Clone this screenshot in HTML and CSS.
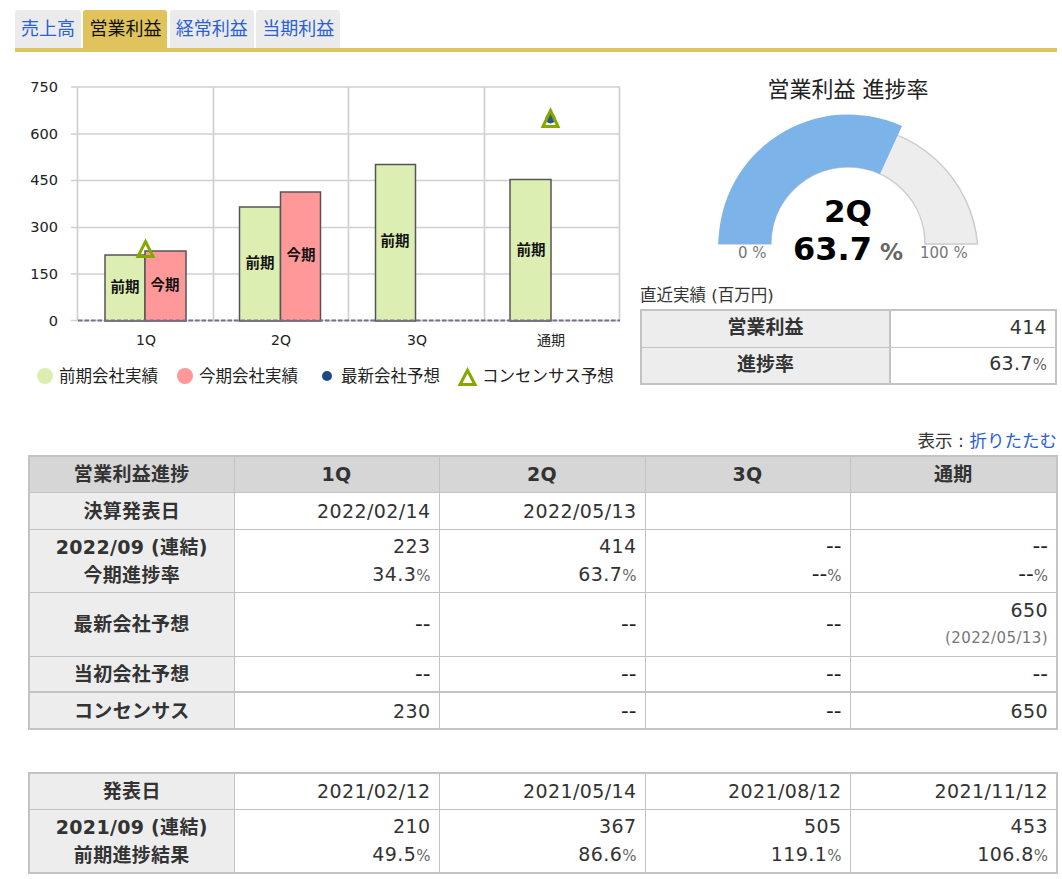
FILE: index.html
```html
<!DOCTYPE html>
<html lang="ja">
<head>
    <meta charset="UTF-8">
    <title>営業利益 進捗率</title>
    <link rel="stylesheet" href="styles.css">
</head>
<body>
    <nav class="tabs">
        <a href="#" class="tab">売上高</a>
        <a href="#" class="tab active">営業利益</a>
        <a href="#" class="tab">経常利益</a>
        <a href="#" class="tab">当期利益</a>
    </nav>

    <div class="summary">
        <!-- bar chart, viewBox is in page coordinates -->
        <svg class="chart" viewBox="15 66 625 334" width="625" height="334">
            <g class="grid">
                <path d="M71 87H620M71 134H620M71 180.500H620M71 227.500H620M71 274H620M71 320.500H620"/>
                <path d="M77.500 87V321M213.500 87V321M348.500 87V321M484.500 87V321M619.500 87V321"/>
            </g>
            <g class="axis-y">
                <text x="58" y="92">750</text>
                <text x="58" y="139">600</text>
                <text x="58" y="185">450</text>
                <text x="58" y="232">300</text>
                <text x="58" y="279">150</text>
                <text x="58" y="326">0</text>
            </g>
            <g class="bars">
                <rect class="prev" x="105" y="255" width="40" height="66"/>
                <rect class="curr" x="145" y="251" width="41" height="70"/>
                <rect class="prev" x="239.500" y="207" width="41" height="114"/>
                <rect class="curr" x="280.500" y="192" width="40" height="129"/>
                <rect class="prev" x="375.500" y="164.500" width="40" height="156.500"/>
                <rect class="prev" x="510" y="179.500" width="41" height="141.500"/>
            </g>
            <g class="bar-label">
                <text x="125" y="292">前期</text>
                <text x="165" y="290">今期</text>
                <text x="260" y="268">前期</text>
                <text x="301" y="260">今期</text>
                <text x="395" y="246">前期</text>
                <text x="531" y="255">前期</text>
            </g>
            <path class="baseline" d="M78 320.500H620"/>
            <g class="axis-x">
                <text x="146" y="345">1Q</text>
                <text x="281" y="345">2Q</text>
                <text x="417" y="345">3Q</text>
                <text x="551" y="345">通期</text>
            </g>
            <circle class="forecast" cx="550.500" cy="118.500" r="5"/>
            <path class="consensus" d="M145.500 241.500L153 256.500H138Z"/>
            <path class="consensus" d="M550.500 110.500L558 126.500H543Z"/>
            <g class="legend">
                <circle cx="45" cy="376" r="8" fill="#ddeeb2"/>
                <text x="59" y="382">前期会社実績</text>
                <circle cx="185" cy="376" r="8" fill="#ff9999"/>
                <text x="199" y="382">今期会社実績</text>
                <circle cx="327" cy="376" r="5" fill="#1f4a80"/>
                <text x="341" y="382">最新会社予想</text>
                <path class="consensus" d="M467.500 370.300L475 384.500H460Z"/>
                <text x="482" y="382">コンセンサス予想</text>
            </g>
        </svg>

        <div class="progress">
            <h2 class="progress-title">営業利益 進捗率</h2>
            <!-- 63.7% of the half circle, center 130,132 -->
            <svg class="gauge" viewBox="0 0 417 165" width="417" height="165">
                <g transform="translate(78 0)">
                    <path class="gauge-bg" d="M.5 132A130 130 0 0 1 259.500 132H207A77 77 0 0 0 53 132Z"/>
                    <path class="gauge-fill" d="M.5 132A130 130 0 0 1 184 14L162 62A77 77 0 0 0 53 132Z"/>
                    <text class="gauge-q" x="130" y="110">2Q</text>
                    <text class="gauge-val" x="75" y="148">63.7</text>
                    <text class="gauge-pct" x="162" y="148">%</text>
                    <text class="gauge-min" x="20" y="146">0 %</text>
                    <text class="gauge-min" x="202" y="146">100 %</text>
                </g>
            </svg>
            <div class="latest-caption">直近実績 (百万円)</div>
            <table class="latest">
                <tr><th>営業利益</th><td>414</td></tr>
                <tr><th>進捗率</th><td>63.7<small>%</small></td></tr>
            </table>
        </div>
    </div>

    <div class="display-toggle">表示 : <a href="#">折りたたむ</a></div>

    <table class="results">
        <colgroup><col class="c-label"><col class="c-b"><col class="c-a"><col class="c-b"><col class="c-last"></colgroup>
        <tr class="head h36">
            <th>営業利益進捗</th><th>1Q</th><th>2Q</th><th>3Q</th><th>通期</th>
        </tr>
        <tr class="h37">
            <th>決算発表日</th><td>2022/02/14</td><td>2022/05/13</td><td></td><td></td>
        </tr>
        <tr class="h63">
            <th>2022/09 (連結)<span class="line2">今期進捗率</span></th>
            <td>223<span class="line2">34.3<small>%</small></span></td>
            <td>414<span class="line2">63.7<small>%</small></span></td>
            <td><span class="dash">--</span><span class="line2"><span class="dash">--</span><small>%</small></span></td>
            <td><span class="dash">--</span><span class="line2"><span class="dash">--</span><small>%</small></span></td>
        </tr>
        <tr class="h64">
            <th>最新会社予想</th><td><span class="dash">--</span></td><td><span class="dash">--</span></td><td><span class="dash">--</span></td>
            <td>650<span class="line2 date">(2022/05/13)</span></td>
        </tr>
        <tr class="h36">
            <th>当初会社予想</th><td><span class="dash">--</span></td><td><span class="dash">--</span></td><td><span class="dash">--</span></td><td><span class="dash">--</span></td>
        </tr>
        <tr class="h37 thick-top">
            <th>コンセンサス</th><td>230</td><td><span class="dash">--</span></td><td><span class="dash">--</span></td><td>650</td>
        </tr>
    </table>

    <table class="results previous">
        <colgroup><col class="c-label"><col class="c-b"><col class="c-a"><col class="c-b"><col class="c-last"></colgroup>
        <tr class="h36">
            <th>発表日</th><td>2021/02/12</td><td>2021/05/14</td><td>2021/08/12</td><td>2021/11/12</td>
        </tr>
        <tr class="h64">
            <th>2021/09 (連結)<span class="line2">前期進捗結果</span></th>
            <td>210<span class="line2">49.5<small>%</small></span></td>
            <td>367<span class="line2">86.6<small>%</small></span></td>
            <td>505<span class="line2">119.1<small>%</small></span></td>
            <td>453<span class="line2">106.8<small>%</small></span></td>
        </tr>
    </table>
</body>
</html>
```

FILE: styles.css
```css
body {
    font-family: "DejaVu Sans", "Noto Sans CJK JP", sans-serif;
    background: white;
    color: #333;
    margin: 0;
    padding: 10px 5px 0 15px;
}

a {
    color: #2a5fd6;
    text-decoration: none;
}

.tabs {
    display: flex;
    gap: 2.400px;
    height: 38px;
    border-bottom: 4px solid #e0c35c;
}

.tab {
    background: #ebebeb;
    border-radius: 3px 3px 0 0;
    padding: 0 6px;
    font-size: 18px;
    line-height: 37px;
}

.tab.active {
    background: #e0c35c;
    color: #111;
}

.summary {
    display: flex;
    margin-top: 14px;
}

.chart {
    display: block;
}

.grid path {
    fill: none;
    stroke: #d0d0d0;
    stroke-width: 1.700;
}

.axis-y text {
    font-size: 14.500px;
    text-anchor: end;
    fill: #222;
}

.axis-x text {
    font-size: 14px;
    text-anchor: middle;
    fill: #222;
}

.bars rect {
    stroke: #555;
    stroke-width: 1.500;
}

.bars .prev {
    fill: #ddeeb2;
}

.bars .curr {
    fill: #ff9999;
}

.bar-label text {
    font-size: 14.500px;
    font-weight: bold;
    text-anchor: middle;
    fill: #111;
}

.baseline {
    stroke: #7d6b91;
    stroke-width: 2;
    stroke-dasharray: 4.500 2;
}

.forecast {
    fill: #2f5688;
}

.consensus {
    fill: none;
    stroke: #84a800;
    stroke-width: 3;
}

.legend text {
    font-size: 16.500px;
    fill: #222;
}

.progress {
    width: 417px;
}

.progress-title {
    font-size: 22px;
    font-weight: normal;
    text-align: center;
    color: #222;
    margin: 8px 0 0;
    line-height: 32px;
    padding-right: 1px;
}

.gauge {
    display: block;
    margin-top: 6px;
}

.gauge-bg {
    fill: #ededed;
    stroke: #ccc;
    stroke-width: 1.500;
}

.gauge-fill {
    fill: #7cb4ea;
}

.gauge-q,
.gauge-val {
    font-weight: bold;
    fill: #000;
}

.gauge-q {
    font-size: 31px;
    text-anchor: middle;
}

.gauge-val {
    font-size: 32px;
}

.gauge-pct {
    font-size: 23px;
    font-weight: bold;
    fill: #666;
}

.gauge-min {
    font-size: 15px;
    fill: #777;
}

.latest-caption {
    font-size: 16.500px;
    line-height: 22px;
    margin: 8px 0 2px 0;
    color: #333;
}

table {
    border-collapse: collapse;
    table-layout: fixed;
    font-size: 19px;
}

.latest {
    width: 417px;
    border: 2px solid #c3c3c3;
}

.latest th {
    width: 247px;
    height: 32.500px;
    padding: 0 0 3px;
    line-height: 28px;
    background: #ededed;
    border: 1px solid #c3c3c3;
    border-right: 2px solid #c3c3c3;
}

.latest td {
    text-align: right;
    padding: 0 8px 3px 0;
    line-height: 28px;
    letter-spacing: 0.300px;
    border: 1px solid #c3c3c3;
}

small {
    font-size: 15px;
    color: #666;
    letter-spacing: 0;
}

.display-toggle {
    font-size: 17.500px;
    line-height: 24px;
    height: 26px;
    text-align: right;
    margin-top: 29px;
}

.results {
    width: 1028px;
    margin-left: 13px;
    border: 2px solid #c3c3c3;
}

.c-label,
.c-b {
    width: 205px;
}

.c-a {
    width: 206px;
}

.c-last {
    width: 207px;
}

.results th {
    background: #ededed;
    border: 1px solid #c3c3c3;
    padding: 0;
    line-height: 28px;
    letter-spacing: 0.300px;
}

.results td {
    border: 1px solid #c3c3c3;
    padding: 0 8px 0 0;
    text-align: right;
    line-height: 28px;
    letter-spacing: 0.400px;
}

.results .head th {
    background: #d6d6d6;
}

.line2 {
    display: block;
}

.date {
    font-size: 15px;
    color: #777;
}

.dash {
    font-size: 21.500px;
    letter-spacing: 0;
    color: #222;
}

.h36 { height: 36px; }
.h37 { height: 37px; }
.h63 { height: 63px; }
.h64 { height: 64px; }

.thick-top th,
.thick-top td {
    border-top: 2px solid #c3c3c3;
}

.previous {
    margin-top: 42px;
}
```
